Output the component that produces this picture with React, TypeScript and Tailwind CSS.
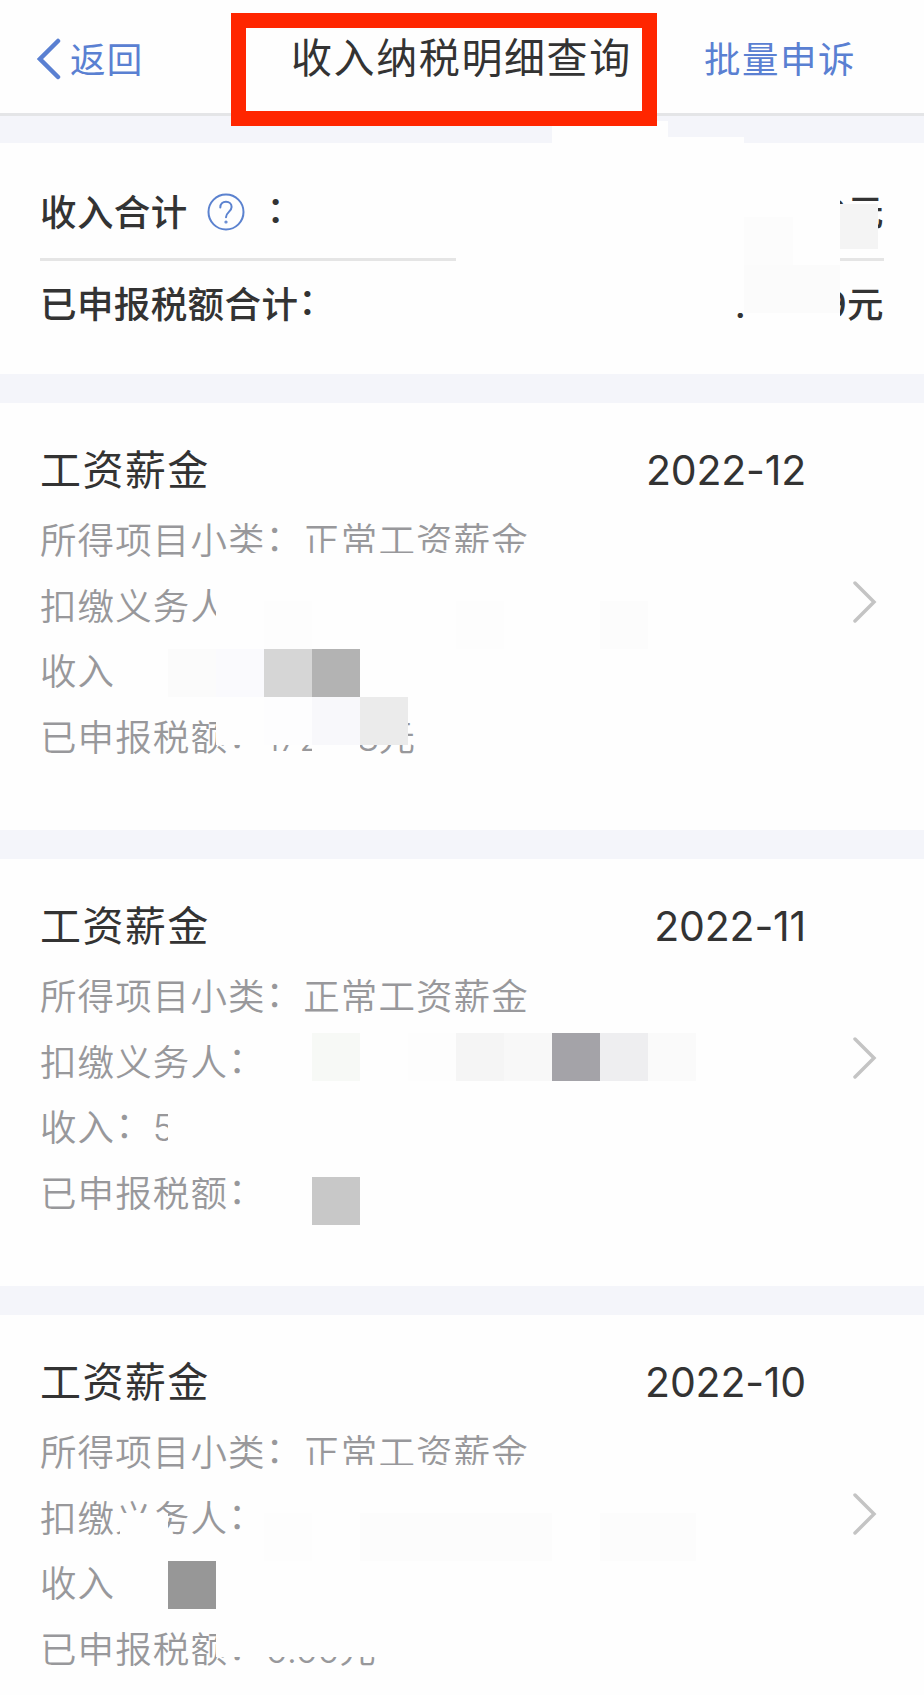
import clsx from "clsx";

interface Block {
  x: number;
  y: number;
  w: number;
  h: number;
  color?: string;
}

interface IncomeRecord {
  month: string;
  rows: { label: string; value: string; numeric?: boolean }[];
  // privacy mosaic, coordinates are relative to the card
  mosaic: Block[];
}

const PAPER = "#fefefe";
const CELL = 48;

const cell = (x: number, y: number, color: string): Block => ({ x, y, w: CELL, h: CELL, color });

const records: IncomeRecord[] = [
  {
    month: "2022-12",
    rows: [
      { label: "所得项目小类", value: "正常工资薪金" },
      { label: "扣缴义务人", value: "" },
      { label: "收入", value: "" },
      { label: "已申报税额", value: "172\u30008元", numeric: true },
    ],
    mosaic: [
      { x: 216, y: 150, w: 480, h: 96 },
      { x: 114, y: 246, w: 582, h: 48 },
      { x: 216, y: 294, w: 192, h: 48 },
      { x: 312, y: 342, w: 48, h: 30 },
      cell(264, 198, "#fdfdfd"),
      cell(456, 198, "#fdfdfd"),
      cell(600, 198, "#fcfcfc"),
      cell(168, 246, "#fbfbfb"),
      cell(216, 246, "#fafafd"),
      cell(264, 246, "#d6d6d6"),
      cell(312, 246, "#b3b3b3"),
      cell(264, 294, "#fdfdfe"),
      cell(312, 294, "#f8f8fb"),
      cell(360, 294, "#ebebeb"),
    ],
  },
  {
    month: "2022-11",
    rows: [
      { label: "所得项目小类", value: "正常工资薪金" },
      { label: "扣缴义务人", value: "" },
      { label: "收入", value: "5", numeric: true },
      { label: "已申报税额", value: "" },
    ],
    mosaic: [
      { x: 168, y: 222, w: 528, h: 96 },
      cell(312, 174, "#f7f9f6"),
      cell(408, 174, "#fdfdfd"),
      cell(456, 174, "#f5f5f5"),
      cell(504, 174, "#f8f8f8"),
      cell(552, 174, "#a4a3a8"),
      cell(600, 174, "#eeeef0"),
      cell(648, 174, "#fafafa"),
      cell(312, 318, "#c8c8c8"),
    ],
  },
  {
    month: "2022-10",
    rows: [
      { label: "所得项目小类", value: "正常工资薪金" },
      { label: "扣缴义务人", value: "" },
      { label: "收入", value: "" },
      { label: "已申报税额", value: "0.00元", numeric: true },
    ],
    mosaic: [
      { x: 264, y: 150, w: 432, h: 96 },
      { x: 120, y: 198, w: 48, h: 48 },
      { x: 114, y: 246, w: 582, h: 48 },
      { x: 216, y: 294, w: 480, h: 48 },
      cell(264, 198, "#fdfdfd"),
      { x: 360, y: 198, w: 192, h: 48, color: "#fcfcfc" },
      { x: 600, y: 198, w: 96, h: 48, color: "#fcfcfc" },
      cell(168, 246, "#979797"),
    ],
  },
];

const summaryMosaic: Block[] = [
  { x: 552, y: -22, w: 116, h: 30 },
  { x: 668, y: -6, w: 76, h: 14 },
  { x: 456, y: 20, w: 384, h: 150 },
  { x: 744, y: 150, w: 96, h: 47 },
  { x: 744, y: 74, w: 49, h: 48, color: "#fcfcfc" },
  { x: 744, y: 122, w: 96, h: 48, color: "#fbfbfb" },
  { x: 840, y: 61, w: 38, h: 45, color: "#f4f4f4" },
];

function Mosaic({ blocks }: { blocks: Block[] }) {
  return (
    <>
      {blocks.map((b, i) => (
        <div
          key={i}
          className="absolute"
          style={{ left: b.x, top: b.y, width: b.w, height: b.h, background: b.color ?? PAPER }}
        />
      ))}
    </>
  );
}

// full-width colon, nudged up to sit at the middle of the characters
function Colon() {
  return <span className="inline-block -translate-y-[3px]">：</span>;
}

function Chevron({ className, flip, width }: { className?: string; flip?: boolean; width: number }) {
  return (
    <svg
      viewBox="0 0 24 42"
      className={clsx("h-[42px] w-6 shrink-0", className)}
      fill="none"
      stroke="currentColor"
      strokeWidth={width}
      strokeLinecap="round"
    >
      <path d={flip ? "M21 3 3 21l18 18" : "M2 2 21 21 2 40"} />
    </svg>
  );
}

function HelpIcon() {
  return (
    <svg
      viewBox="0 0 38 38"
      className="mb-[3px] ml-[19px] size-[38px] text-[#5b82cf]"
      fill="none"
      stroke="currentColor"
      strokeWidth="2"
      strokeLinecap="round"
    >
      <circle cx="19" cy="19" r="17.5" />
      <path d="M13.3 14.5c0-3.6 2.4-5.7 5.7-5.7s5.6 2.2 5.6 5.2c0 4.8-5.6 5-5.6 10.3" />
      <circle cx="19" cy="29" r=".6" />
    </svg>
  );
}

function Header() {
  return (
    <header className="relative flex h-[116px] items-center border-b-[3px] border-[#e4e5e7] bg-[#fefefe] pl-[37px] pt-1">
      <button className="flex w-[254px] items-center gap-[9px] text-[#5a80d2]">
        <Chevron flip width={4.5} />
        <span className="mt-1 text-[35.5px] tracking-[1.3px]">返回</span>
      </button>
      <h1 className="w-[413px] whitespace-nowrap text-[41px] tracking-[1.6px] text-[#333]">
        收入纳税明细查询
      </h1>
      <button className="mt-1 whitespace-nowrap text-[36.5px] tracking-[1.5px] text-[#5a80d2]">
        批量申诉
      </button>
      <div className="absolute left-[231px] top-[13px] z-10 h-[113px] w-[426px] border-[15px] border-[#ff2600]" />
    </header>
  );
}

function Summary() {
  return (
    <section className="relative mt-[27px] h-[231px] bg-[#fefefe] px-10 pt-[25px] text-[36.5px] font-medium tracking-[0.4px] text-[#333]">
      <div className="flex h-[93px] items-center border-b-[3px] border-[#e5e5e5]">
        <span>收入合计</span>
        <HelpIcon />
        <span className="ml-[22px]">
          <Colon />
        </span>
        <span className="ml-auto">0元</span>
      </div>
      <div className="flex h-[88px] items-center">
        <span>
          已申报税额合计
          <Colon />
        </span>
        <span className="ml-auto w-[89px]">.</span>
        <span>9元</span>
      </div>
      <Mosaic blocks={summaryMosaic} />
    </section>
  );
}

function RecordCard({ record }: { record: IncomeRecord }) {
  return (
    <section className="relative mt-[29px] h-[427px] bg-[#fefefe] pl-10 pt-[43px]">
      <div className="flex h-[49px] w-[766px] items-center justify-between text-[41px] text-[#333]">
        <h2 className="tracking-[1.4px]">工资薪金</h2>
        <span className="tracking-[-0.2px]">{record.month}</span>
      </div>
      <dl className="mt-[14px] text-[36.5px] leading-[65.5px] font-[350] text-[#98989b]">
        {record.rows.map((row) => (
          <div key={row.label} className="flex whitespace-nowrap tracking-[1.1px]">
            <dt>
              {row.label}
              <Colon />
            </dt>
            <dd className={clsx(row.numeric && "tracking-[-0.6px]")}>{row.value}</dd>
          </div>
        ))}
      </dl>
      <Mosaic blocks={record.mosaic} />
      <Chevron width={3.5} className="absolute left-[853px] top-[178px] text-[#c4c4c4]" />
    </section>
  );
}

export default function App() {
  return (
    <main
      lang="zh-CN"
      className="h-[1695px] w-[924px] overflow-hidden bg-[#f4f5fa] font-['Inter','Noto_Sans_CJK_SC',sans-serif]"
    >
      <Header />
      <Summary />
      {records.map((record) => (
        <RecordCard key={record.month} record={record} />
      ))}
    </main>
  );
}
